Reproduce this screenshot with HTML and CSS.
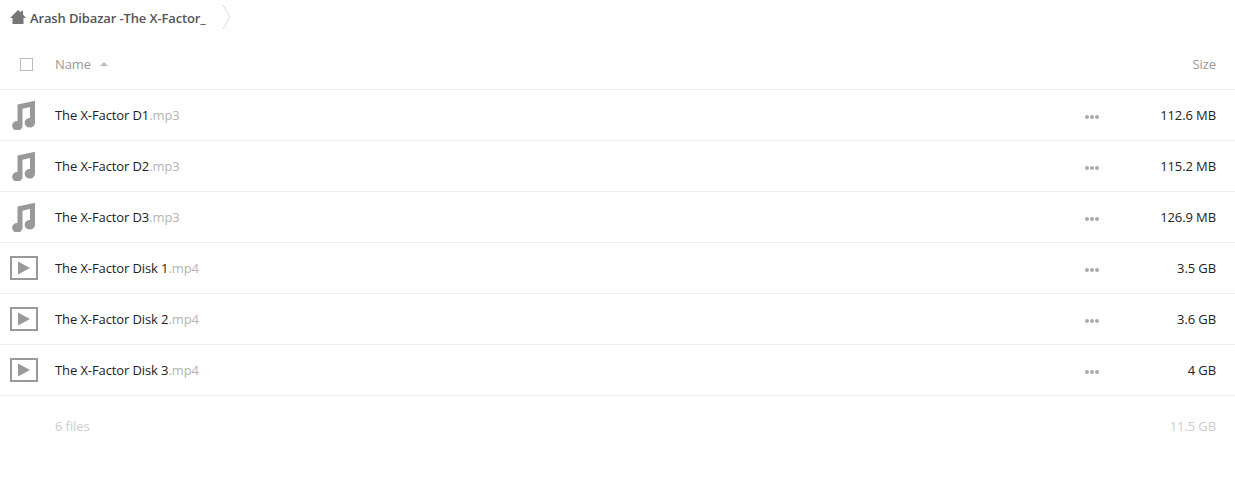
FILE: index.html
```html
<!DOCTYPE html>
<html lang="en">
<head>
    <meta charset="UTF-8">
    <title>Arash Dibazar -The X-Factor_</title>
    <link rel="stylesheet" href="styles.css">
</head>
<body>
    <svg width="0" height="0" class="defs">
        <symbol id="icon-audio" viewBox="0 0 24 30">
            <path fill="#999" d="M5.5 4.5 L23 .8 V22.5 A5.2 4.8 0 1 1 18 18 V7 L10.5 8.8 V25.5 A5.2 4.8 0 1 1 5.5 21 Z"/>
        </symbol>
        <symbol id="icon-video" viewBox="0 0 28 24">
            <path fill="none" stroke="#999" stroke-width="2" d="M1 1 H27 V23 H1 Z"/>
            <path fill="#999" d="M8 5.5 L20 12 L8 18.5 Z"/>
        </symbol>
    </svg>

    <div class="crumbs">
        <svg class="home" width="16" height="14" viewBox="0 0 16 14">
            <path fill="#777" d="M8 0 L11 2.6 V1 H13 V4.4 L16 8 H13.5 V14 H2.5 V8 H0 Z"/>
        </svg>
        <span class="crumb">Arash Dibazar -The X-Factor_</span>
        <svg class="chev" width="10" height="26" viewBox="0 0 10 26">
            <path fill="none" stroke="#ddd" d="M1 1 L8 13 L1 25"/>
        </svg>
    </div>

    <div class="row head">
        <div class="col-icon"><span class="check"></span></div>
        <div class="col-name">Name <span class="sort"></span></div>
        <div class="col-size">Size</div>
    </div>

    <div class="row file">
        <div class="col-icon"><svg class="ic-audio"><use href="#icon-audio"/></svg></div>
        <div class="col-name">The X-Factor D1<span class="ext">.mp3</span></div>
        <div class="dots"><i></i><i></i><i></i></div>
        <div class="col-size">112.6 MB</div>
    </div>
    <div class="row file">
        <div class="col-icon"><svg class="ic-audio"><use href="#icon-audio"/></svg></div>
        <div class="col-name">The X-Factor D2<span class="ext">.mp3</span></div>
        <div class="dots"><i></i><i></i><i></i></div>
        <div class="col-size">115.2 MB</div>
    </div>
    <div class="row file">
        <div class="col-icon"><svg class="ic-audio"><use href="#icon-audio"/></svg></div>
        <div class="col-name">The X-Factor D3<span class="ext">.mp3</span></div>
        <div class="dots"><i></i><i></i><i></i></div>
        <div class="col-size">126.9 MB</div>
    </div>
    <div class="row file">
        <div class="col-icon"><svg class="ic-video"><use href="#icon-video"/></svg></div>
        <div class="col-name">The X-Factor Disk 1<span class="ext">.mp4</span></div>
        <div class="dots"><i></i><i></i><i></i></div>
        <div class="col-size">3.5 GB</div>
    </div>
    <div class="row file">
        <div class="col-icon"><svg class="ic-video"><use href="#icon-video"/></svg></div>
        <div class="col-name">The X-Factor Disk 2<span class="ext">.mp4</span></div>
        <div class="dots"><i></i><i></i><i></i></div>
        <div class="col-size">3.6 GB</div>
    </div>
    <div class="row file">
        <div class="col-icon"><svg class="ic-video"><use href="#icon-video"/></svg></div>
        <div class="col-name">The X-Factor Disk 3<span class="ext">.mp4</span></div>
        <div class="dots"><i></i><i></i><i></i></div>
        <div class="col-size">4 GB</div>
    </div>

    <div class="row summary">
        <div class="col-icon"></div>
        <div class="col-name">6 files</div>
        <div class="col-size">11.5 GB</div>
    </div>
</body>
</html>
```

FILE: styles.css
```css
body {
    margin: 0;
    background-color: #fff;
    color: #222;
    font-family: "Open Sans", sans-serif;
    font-size: 13px;
    letter-spacing: -0.1px;
    overflow: hidden;
}

.defs {
    position: absolute;
}

.crumbs {
    display: flex;
    align-items: center;
    height: 32px;
    padding: 2px 0 0 10px;
}

.home {
    margin-bottom: 2px;
}

.crumb {
    margin-left: 4px;
    font-weight: 600;
    font-size: 13px;
    letter-spacing: -0.13px;
    color: #555;
}

.chev {
    margin-left: 16px;
    margin-bottom: 2px;
}

.row {
    display: flex;
    align-items: center;
    padding-right: 19px;
    border-bottom: 1px solid #eee;
}

.head {
    height: 50px;
    padding-top: 5px;
    color: #999;
}

.file {
    height: 50px;
}

.summary {
    height: 60px;
    border-bottom: 0;
    color: #ccc;
}

.col-icon {
    display: flex;
    justify-content: center;
    width: 28px;
    margin: 0 17px 0 10px;
}

.col-name {
    flex: 1;
    display: flex;
    align-items: center;
    white-space: pre;
}

.col-size {
    width: 100px;
    text-align: right;
}

.ext {
    color: #b5b5b5;
}

.check {
    width: 11px;
    height: 11px;
    margin-left: 4px;
    border: 1px solid #bbb;
}

.sort {
    width: 0;
    height: 0;
    margin-left: 6px;
    border-left: 4px solid transparent;
    border-right: 4px solid transparent;
    border-bottom: 4px solid #bbb;
}

.ic-audio {
    width: 24px;
    height: 30px;
}

.ic-video {
    width: 28px;
    height: 24px;
}

.dots {
    display: flex;
    gap: 1px;
    margin-top: 4px;
    margin-right: 17px;
}

.dots i {
    width: 4px;
    height: 4px;
    border-radius: 50%;
    background-color: #aaa;
}
```
